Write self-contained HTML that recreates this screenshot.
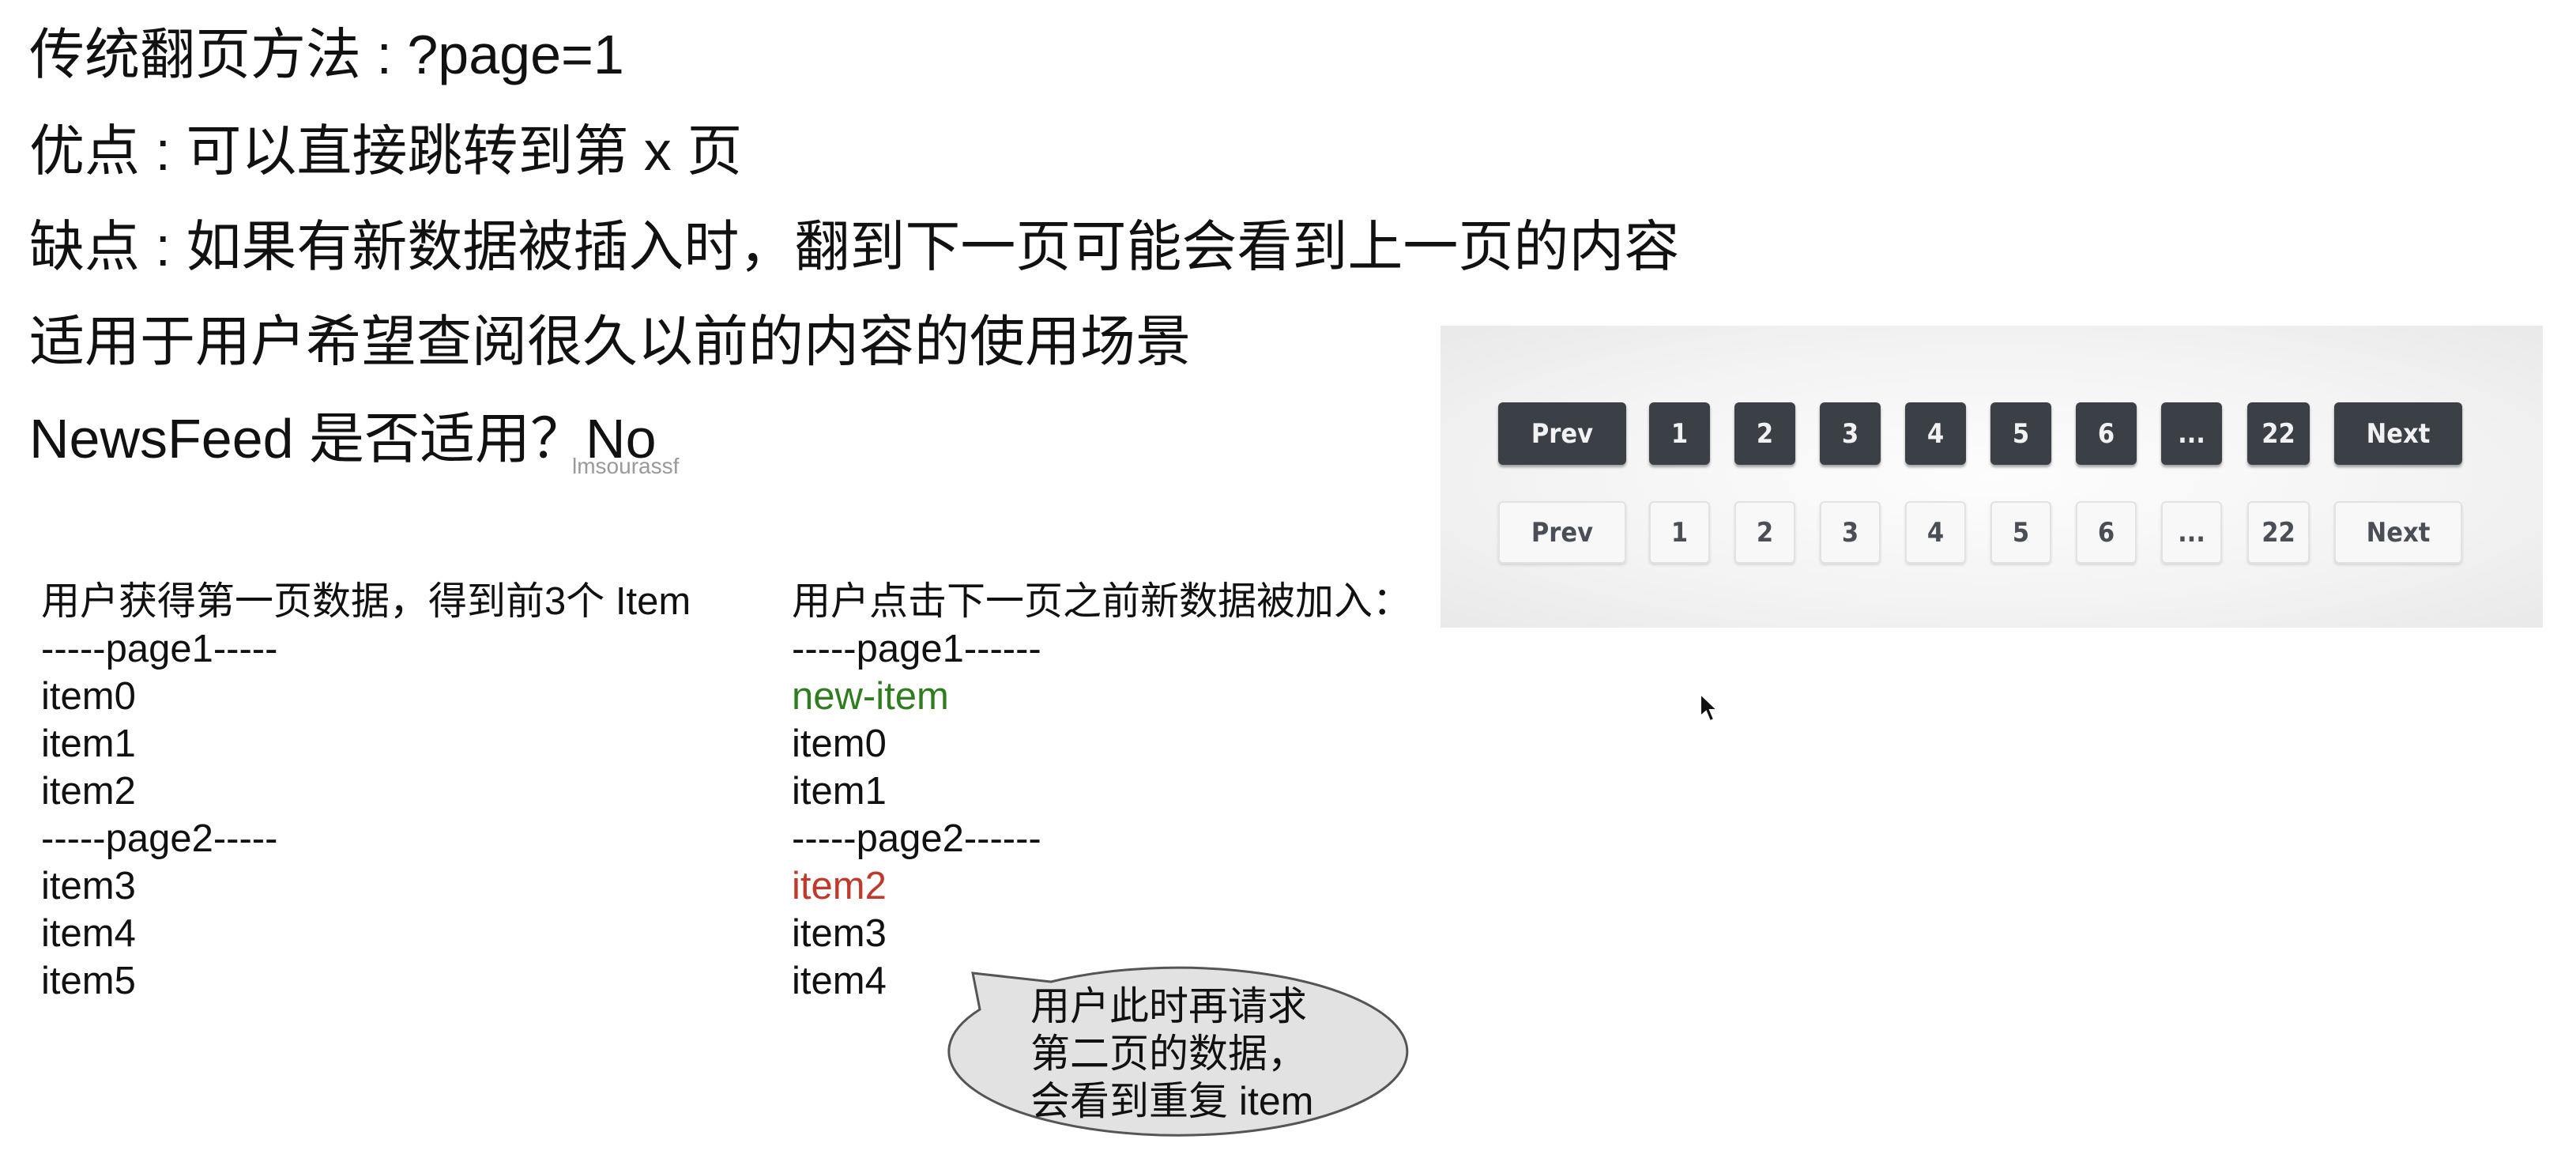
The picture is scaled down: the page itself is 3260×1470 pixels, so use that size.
<!DOCTYPE html>
<html><head><meta charset="utf-8"><style>
body{margin:0;width:3260px;height:1470px;background:#fff;position:relative;overflow:hidden;font-family:"Liberation Sans","Noto Sans CJK SC",sans-serif;color:#111}
.t{position:absolute;left:37px;font-size:70px;line-height:80px;white-space:nowrap}
.l{position:absolute;font-size:49px;line-height:60px;white-space:nowrap}
.pg{position:absolute;left:1823px;top:412px;width:1395px;height:382px;background:radial-gradient(ellipse at 50% 50%,#fdfdfd 0%,#f3f3f3 60%,#e9e9e9 100%)}
.b{position:absolute;height:79px;border-radius:6px;font:bold 34px "DejaVu Sans Condensed","Liberation Sans",sans-serif;display:flex;align-items:center;justify-content:center}
.d{background:#3b4047;color:#f2f2f2;box-shadow:0 3px 3px rgba(0,0,0,.35)}
.w{background:#f8f8f8;color:#4a4f57;border:2px solid #e2e2e2;box-sizing:border-box;box-shadow:0 2px 3px rgba(0,0,0,.12)}
</style></head><body>
<div class="t" style="top:29px">传统翻页方法 : ?page=1</div>
<div class="t" style="top:151px">优点 : 可以直接跳转到第 x 页</div>
<div class="t" style="top:272px">缺点 : 如果有新数据被插入时，翻到下一页可能会看到上一页的内容</div>
<div class="t" style="top:392px">适用于用户希望查阅很久以前的内容的使用场景</div>
<div class="t" style="top:515px">NewsFeed 是否适用？No</div>
<div style="position:absolute;left:724px;top:574px;font-size:28px;color:#999">lmsourassf</div>

<div class="l" style="left:52px;top:731px">用户获得第一页数据，得到前3个 Item<br>-----page1-----<br>item0<br>item1<br>item2<br>-----page2-----<br>item3<br>item4<br>item5</div>
<div class="l" style="left:1002px;top:731px">用户点击下一页之前新数据被加入：<br>-----page1------<br><span style="color:#2f7d1f">new-item</span><br>item0<br>item1<br>-----page2------<br><span style="color:#c0392b">item2</span><br>item3<br>item4</div>

<div class="pg">
<div class="b d" style="left:73px;top:97px;width:162px">Prev</div>
<div class="b d" style="left:264px;top:97px;width:77px">1</div>
<div class="b d" style="left:372px;top:97px;width:77px">2</div>
<div class="b d" style="left:480px;top:97px;width:77px">3</div>
<div class="b d" style="left:588px;top:97px;width:77px">4</div>
<div class="b d" style="left:696px;top:97px;width:77px">5</div>
<div class="b d" style="left:804px;top:97px;width:77px">6</div>
<div class="b d" style="left:912px;top:97px;width:77px">...</div>
<div class="b d" style="left:1021px;top:97px;width:79px">22</div>
<div class="b d" style="left:1131px;top:97px;width:162px">Next</div>
<div class="b w" style="left:73px;top:222px;width:162px">Prev</div>
<div class="b w" style="left:264px;top:222px;width:77px">1</div>
<div class="b w" style="left:372px;top:222px;width:77px">2</div>
<div class="b w" style="left:480px;top:222px;width:77px">3</div>
<div class="b w" style="left:588px;top:222px;width:77px">4</div>
<div class="b w" style="left:696px;top:222px;width:77px">5</div>
<div class="b w" style="left:804px;top:222px;width:77px">6</div>
<div class="b w" style="left:912px;top:222px;width:77px">...</div>
<div class="b w" style="left:1021px;top:222px;width:79px">22</div>
<div class="b w" style="left:1131px;top:222px;width:162px">Next</div>
</div>

<svg style="position:absolute;left:2150px;top:876px" width="30" height="40" viewBox="0 0 30 40"><path d="M2 2 L2 30 L9 24 L14 36 L19 34 L14 22 L23 22 Z" fill="#111" stroke="#fff" stroke-width="2"/></svg>

<svg style="position:absolute;left:1150px;top:1190px" width="700" height="280" viewBox="1150 1190 700 280">
<path d="M1231 1231 L1330 1242 A290 106 0 1 1 1240 1277 Z" fill="#e2e2e2" stroke="#555" stroke-width="3"/>
</svg>
<div style="position:absolute;left:1304px;top:1243px;font-size:50px;line-height:60px;white-space:nowrap">用户此时再请求<br>第二页的数据，<br>会看到重复 item</div>
</body></html>
